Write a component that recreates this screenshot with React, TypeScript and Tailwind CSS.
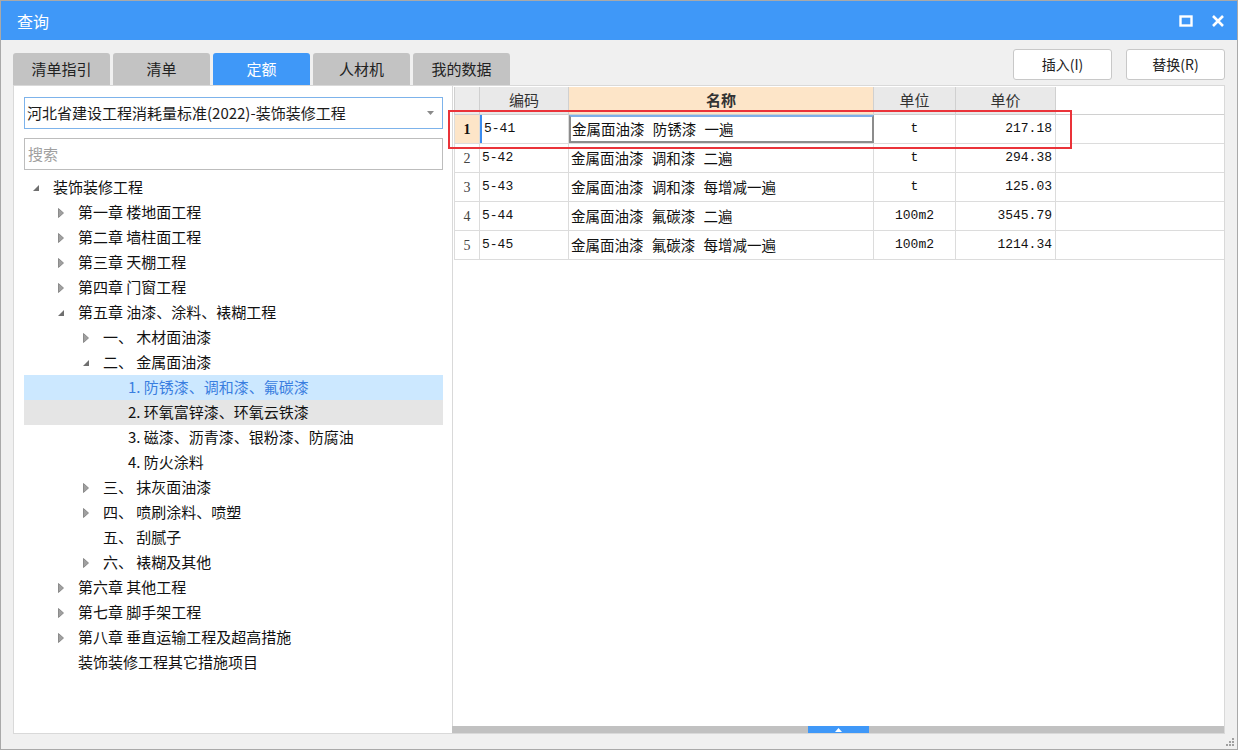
import React from "react";

type TreeNode = {
    label: string;
    level: number;
    toggle?: "open" | "closed";
    state?: "selected" | "hover";
};

const tree: TreeNode[] = [
    { label: "装饰装修工程", level: 0, toggle: "open" },
    { label: "第一章 楼地面工程", level: 1, toggle: "closed" },
    { label: "第二章 墙柱面工程", level: 1, toggle: "closed" },
    { label: "第三章 天棚工程", level: 1, toggle: "closed" },
    { label: "第四章 门窗工程", level: 1, toggle: "closed" },
    { label: "第五章 油漆、涂料、裱糊工程", level: 1, toggle: "open" },
    { label: "一、 木材面油漆", level: 2, toggle: "closed" },
    { label: "二、 金属面油漆", level: 2, toggle: "open" },
    { label: "1. 防锈漆、调和漆、氟碳漆", level: 3, state: "selected" },
    { label: "2. 环氧富锌漆、环氧云铁漆", level: 3, state: "hover" },
    { label: "3. 磁漆、沥青漆、银粉漆、防腐油", level: 3 },
    { label: "4. 防火涂料", level: 3 },
    { label: "三、 抹灰面油漆", level: 2, toggle: "closed" },
    { label: "四、 喷刷涂料、喷塑", level: 2, toggle: "closed" },
    { label: "五、 刮腻子", level: 2 },
    { label: "六、 裱糊及其他", level: 2, toggle: "closed" },
    { label: "第六章 其他工程", level: 1, toggle: "closed" },
    { label: "第七章 脚手架工程", level: 1, toggle: "closed" },
    { label: "第八章 垂直运输工程及超高措施", level: 1, toggle: "closed" },
    { label: "装饰装修工程其它措施项目", level: 1 },
];

const rows = [
    { code: "5-41", name: "金属面油漆 防锈漆 一遍", unit: "t", price: "217.18" },
    { code: "5-42", name: "金属面油漆 调和漆 二遍", unit: "t", price: "294.38" },
    { code: "5-43", name: "金属面油漆 调和漆 每增减一遍", unit: "t", price: "125.03" },
    { code: "5-44", name: "金属面油漆 氟碳漆 二遍", unit: "100m2", price: "3545.79" },
    { code: "5-45", name: "金属面油漆 氟碳漆 每增减一遍", unit: "100m2", price: "1214.34" },
];

const tabs = ["清单指引", "清单", "定额", "人材机", "我的数据"];

const ui = { fontFamily: '"Noto Sans CJK SC", "Noto Sans", sans-serif' };
const grid = { fontFamily: '"Liberation Mono", "Noto Sans CJK SC", monospace' };
const serif = { fontFamily: '"Liberation Serif", serif' };

function Toggle({ kind }: { kind?: "open" | "closed" }) {
    if (kind === "open")
        return (
            <svg width="8" height="8" viewBox="0 0 8 8">
                <path d="M7 1 L7 7 L1 7 Z" fill="#6f6f6f" />
            </svg>
        );
    if (kind === "closed")
        return (
            <svg width="6" height="10" viewBox="0 0 6 10">
                <path d="M0.5 0.5 L5.5 5 L0.5 9.5 Z" fill="#a0a0a0" stroke="#7a7a7a" strokeWidth="0.8" />
            </svg>
        );
    return null;
}

function TreeRow({ node }: { node: TreeNode }) {
    const bg =
        node.state === "selected" ? "bg-[#cce8ff]" : node.state === "hover" ? "bg-[#e5e5e5]" : "";
    const color = node.state === "selected" ? "text-[#3a7ee0]" : "text-[#111]";
    return (
        <div className={`flex h-[25px] items-center ${bg}`}>
            <div style={{ width: node.level * 25 }} className="shrink-0" />
            <div className="flex w-[29px] shrink-0 items-center justify-center pr-[5px]">
                <Toggle kind={node.toggle} />
            </div>
            <span className={`whitespace-pre text-[15px] ${color}`}>{node.label}</span>
        </div>
    );
}

export default function App() {
    return (
        <div
            className="relative flex h-[750px] w-[1238px] flex-col overflow-hidden border border-[#a9a9a9] bg-[#f0f0f0]"
            style={ui}
        >
            {/* title bar */}
            <div className="flex h-[39px] shrink-0 items-center justify-between bg-[#3f98f8] pl-[16px] pr-[12px]">
                <span className="text-[16px] text-white">查询</span>
                <div className="flex items-center gap-[18px]">
                    <svg width="14" height="12" viewBox="0 0 14 12">
                        <rect x="1.5" y="1.5" width="11" height="9" fill="none" stroke="white" strokeWidth="2.4" />
                    </svg>
                    <svg width="14" height="14" viewBox="0 0 14 14">
                        <path d="M2 2 L12 12 M12 2 L2 12" stroke="white" strokeWidth="2.6" />
                    </svg>
                </div>
            </div>

            {/* tabs + buttons */}
            <div className="flex h-[45px] shrink-0 items-start justify-between px-[12px]">
                <div className="mt-[13px] flex gap-[3px]">
                    {tabs.map((t) => (
                        <div
                            key={t}
                            className={`flex h-[32px] w-[97px] items-center justify-center rounded-t-[3px] text-[15px] ${
                                t === "定额"
                                    ? "bg-[#3f98f8] text-white"
                                    : "bg-[#c3c3c3] text-[#222]"
                            }`}
                        >
                            {t}
                        </div>
                    ))}
                </div>
                <div className="mt-[9px] flex gap-[14px]">
                    {["插入(I)", "替换(R)"].map((b) => (
                        <div
                            key={b}
                            className="flex h-[31px] w-[99px] items-center justify-center rounded-[3px] border border-[#c8c8c8] bg-white text-[14px] text-[#222]"
                        >
                            {b}
                        </div>
                    ))}
                </div>
            </div>

            {/* main */}
            <div className="flex h-[649px] shrink-0 px-[12px]">
                {/* left panel */}
                <div className="flex w-[440px] shrink-0 flex-col border border-[#d9d9d9] bg-white pl-[10px] pr-[9px] pt-[11px]">
                    <div className="flex h-[32px] items-center justify-between border border-[#7db3eb] pl-[2px] pr-[8px]">
                        <span className="text-[15px] text-[#1a1a1a]">河北省建设工程消耗量标准(2022)-装饰装修工程</span>
                        <svg width="7" height="4" viewBox="0 0 7 4">
                            <path d="M0 0 L7 0 L3.5 4 Z" fill="#8a8a8a" />
                        </svg>
                    </div>
                    <div className="mt-[9px] flex h-[32px] items-center border border-[#bdbdbd] pl-[3px]">
                        <span className="text-[15px] text-[#a0a0a0]">搜索</span>
                    </div>
                    <div className="mt-[5px] flex flex-col">
                        {tree.map((n) => (
                            <TreeRow key={n.label} node={n} />
                        ))}
                    </div>
                </div>

                {/* right panel */}
                <div className="relative flex flex-1 flex-col border border-l-0 border-[#d9d9d9] bg-white">
                    <div className="pl-[1px] pt-[1px]">
                        <div className="flex h-[28px] border-b border-[#d0d0d0] text-[15px] text-[#333]">
                            <div className="w-[26px] border-r border-l border-[#d0d0d0] bg-[#ececec]" />
                            <div className="flex w-[89px] items-center justify-center border-r border-[#d0d0d0] bg-[#e9e9e9]">编码</div>
                            <div className="flex w-[305px] items-center justify-center border-r border-[#d0d0d0] bg-[#fde5c8] font-bold">名称</div>
                            <div className="flex w-[82px] items-center justify-center border-r border-[#d0d0d0] bg-[#e9e9e9]">单位</div>
                            <div className="flex w-[100px] items-center justify-center border-r border-[#d0d0d0] bg-[#e9e9e9]">单价</div>
                        </div>
                        {rows.map((r, i) => {
                            const first = i === 0;
                            return (
                                <div key={r.code} className="flex h-[29px] border-b border-[#dcdcdc] text-[13px] text-[#111]">
                                    <div
                                        className={`flex w-[26px] items-center justify-center border-r border-l border-[#dcdcdc] text-[14px] ${
                                            first ? "bg-[#fde5c8] font-bold text-[#111]" : "text-[#444]"
                                        }`}
                                        style={serif}
                                    >
                                        {i + 1}
                                    </div>
                                    <div
                                        className={`flex w-[89px] items-center border-r border-[#dcdcdc] pl-[2px] ${
                                            first ? "border-l-2 border-l-[#3a8cf0]" : ""
                                        }`}
                                        style={grid}
                                    >
                                        {r.code}
                                    </div>
                                    <div
                                        className={`flex w-[305px] items-center pl-[1px] text-[14.5px] [word-spacing:5px] ${
                                            first
                                                ? "border-2 border-[#8c8c8c] border-t-[#7fb0ea]"
                                                : "border-r border-[#dcdcdc] pl-[2px]"
                                        }`}
                                    >
                                        {r.name}
                                    </div>
                                    <div
                                        className="flex w-[82px] items-center justify-center border-r border-[#dcdcdc]"
                                        style={grid}
                                    >
                                        {r.unit}
                                    </div>
                                    <div
                                        className="flex w-[100px] items-center justify-end border-r border-[#dcdcdc] pr-[3px]"
                                        style={grid}
                                    >
                                        {r.price}
                                    </div>
                                </div>
                            );
                        })}
                    </div>

                    {/* highlight box */}
                    <div className="pointer-events-none absolute left-[-5px] top-[24px] h-[39px] w-[624px] border-2 border-[#ea3339]" />

                    {/* horizontal scrollbar */}
                    <div className="mt-auto flex h-[7px] items-center bg-[#c1c1c1]">
                        <div className="ml-[355px] flex h-[7px] w-[61px] items-center justify-center bg-[#3f98f8]">
                            <svg width="7" height="4" viewBox="0 0 7 4">
                                <path d="M3.5 0 L7 4 L0 4 Z" fill="white" />
                            </svg>
                        </div>
                    </div>
                    <div className="absolute bottom-0 left-[-1px] h-[7px] w-[1px] bg-[#c1c1c1]" />
                </div>
            </div>

            {/* resize grip */}
            <svg className="absolute bottom-[2px] right-[2px]" width="9" height="9" viewBox="0 0 9 9">
                <rect x="6" y="0" width="2" height="2" fill="#a0a0a0" />
                <rect x="3" y="3" width="2" height="2" fill="#a0a0a0" />
                <rect x="6" y="3" width="2" height="2" fill="#a0a0a0" />
                <rect x="0" y="6" width="2" height="2" fill="#a0a0a0" />
                <rect x="3" y="6" width="2" height="2" fill="#a0a0a0" />
                <rect x="6" y="6" width="2" height="2" fill="#a0a0a0" />
            </svg>
        </div>
    );
}
